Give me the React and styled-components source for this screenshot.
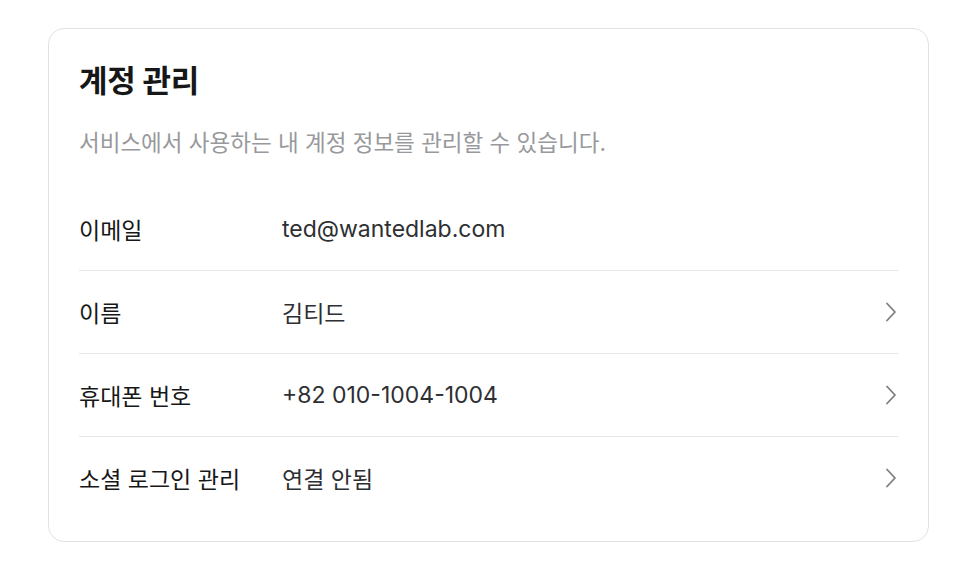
import React from "react";
import styled, { createGlobalStyle } from "styled-components";

const GlobalStyle = createGlobalStyle`
  * {
    box-sizing: border-box;
  }

  body {
    margin: 0;
    background: #ffffff;
    font-family: Inter, "Noto Sans CJK KR", "Noto Sans", sans-serif;
    color: #171717;
  }
`;

const Page = styled.div`
  padding: 28px 44px 20px 48px;
`;

const Card = styled.section`
  border: 1px solid #e1e2e4;
  border-radius: 16px;
  padding: 32px 30px 22px 30px;
  background: #ffffff;
`;

const Title = styled.h2`
  margin: 0;
  font-size: 31px;
  line-height: 40px;
  font-weight: 700;
  color: #171717;
  letter-spacing: -0.3px;
`;

const Desc = styled.p`
  margin: 26px 0 0;
  font-size: 22.5px;
  line-height: 32px;
  color: #98999c;
`;

const List = styled.ul`
  list-style: none;
  margin: 28px 0 0;
  padding: 0;
`;

const Row = styled.li`
  display: grid;
  grid-template-columns: 203px 1fr 12px;
  align-items: center;
  height: 83px;
  border-top: ${({ $first }) => ($first ? "none" : "1px solid #e5e6e8")};
  cursor: ${({ $link }) => ($link ? "pointer" : "default")};
`;

const Label = styled.span`
  font-size: 23px;
  color: #171717;
`;

const Value = styled.span`
  font-size: 23px;
  color: #2e2f33;
`;

const Chevron = styled.svg`
  width: 12px;
  height: 20px;
  justify-self: end;
  margin-right: 1px;
`;

const ChevronIcon = () => (
  <Chevron viewBox="0 0 12 20" fill="none">
    <polyline
      points="2,1.5 10,10 2,18.5"
      stroke="#7c7d80"
      strokeWidth="1.8"
      strokeLinecap="round"
      strokeLinejoin="round"
    />
  </Chevron>
);

const rows = [
  { label: "이메일", value: "ted@wantedlab.com", link: false },
  { label: "이름", value: "김티드", link: true },
  { label: "휴대폰 번호", value: "+82 010-1004-1004", link: true },
  { label: "소셜 로그인 관리", value: "연결 안됨", link: true },
];

export default function App() {
  return (
    <Page>
      <GlobalStyle />
      <Card>
        <Title>계정 관리</Title>
        <Desc>서비스에서 사용하는 내 계정 정보를 관리할 수 있습니다.</Desc>
        <List>
          {rows.map((r, i) => (
            <Row key={r.label} $first={i === 0} $link={r.link}>
              <Label>{r.label}</Label>
              <Value>{r.value}</Value>
              {r.link ? <ChevronIcon /> : <span />}
            </Row>
          ))}
        </List>
      </Card>
    </Page>
  );
}
